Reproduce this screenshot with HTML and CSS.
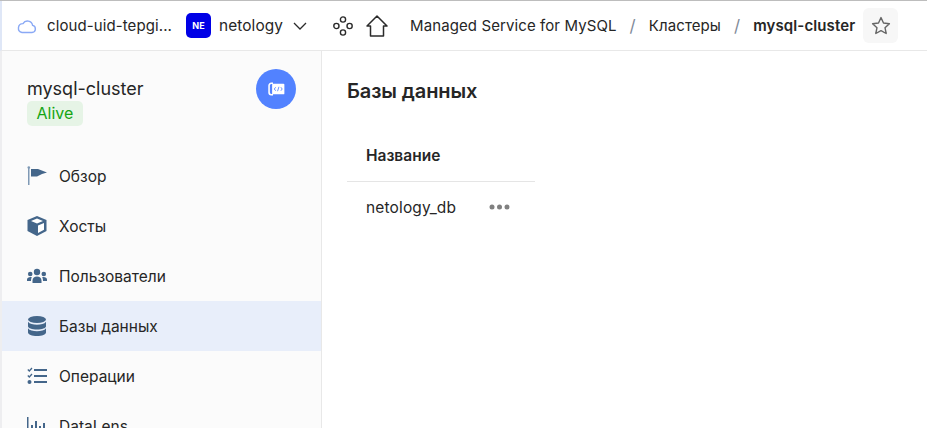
FILE: index.html
```html
<!DOCTYPE html>
<html lang="en">
<head>
    <meta charset="UTF-8">
    <title>mysql-cluster</title>
    <link rel="stylesheet" href="styles.css">
</head>
<body>
    <!-- Top bar -->
    <header class="topbar">
        <div class="cloud">
            <svg class="cloud-icon" width="20" height="16" viewBox="0 0 20 16"><path d="M5 14.500h10a3.600 3.600 0 0 0 .6-7.100A5.200 5.200 0 0 0 6 5.600 4.500 4.500 0 0 0 5 14.500z" fill="none" stroke="#8aa9f5" stroke-width="1.400"/></svg>
            <span class="cloud-name">cloud-uid-tepgi...</span>
        </div>
        <div class="folder">
            <span class="folder-badge">NE</span>
            <span class="folder-name">netology</span>
            <svg width="14" height="8" viewBox="0 0 14 8"><path d="M1 1l6 6 6-6" fill="none" stroke="#2b2b2b" stroke-width="1.300"/></svg>
        </div>
        <svg class="services" width="20" height="20" viewBox="0 0 20 20" fill="none" stroke="#2b2b2b" stroke-width="1.400">
            <circle cx="10" cy="3.500" r="2.600"/><circle cx="3.400" cy="10" r="2.600"/><circle cx="16.600" cy="10" r="2.600"/><circle cx="10" cy="16.500" r="2.600"/>
        </svg>
        <svg class="home" width="22" height="22" viewBox="0 0 22 22" fill="none" stroke="#2b2b2b" stroke-width="1.500"><path d="M1 11L11 1l10 10h-3.500v10h-13V11z" stroke-linejoin="round"/></svg>
        <nav class="crumbs">
            <span>Managed Service for MySQL</span>
            <span class="crumb-sep">/</span>
            <span>Кластеры</span>
            <span class="crumb-sep">/</span>
            <span class="crumb-current">mysql-cluster</span>
        </nav>
        <div class="star-btn">
            <svg width="20" height="19" viewBox="0 0 20 19"><path d="M10 1.600l2.500 5.400 5.900.7-4.400 4 1.200 5.800-5.200-2.900-5.200 2.900 1.200-5.800-4.400-4 5.900-.7z" fill="none" stroke="#666" stroke-width="1.400" stroke-linejoin="round"/></svg>
        </div>
    </header>

    <div class="main">
        <!-- Sidebar -->
        <aside class="sidebar">
            <div class="side-head">
                <div class="side-title">
                    <div class="cluster-name">mysql-cluster</div>
                    <span class="status">Alive</span>
                </div>
                <span class="service-logo">
                    <svg width="19" height="14" viewBox="0 0 20 16">
                        <path d="M6 1.500H4A2.500 2.500 0 0 0 1.500 4v8A2.500 2.500 0 0 0 4 14.500h2" fill="none" stroke="#fff" stroke-width="1.800"/>
                        <rect x="5" y="2" width="14" height="12" rx="1" fill="#fff"/>
                        <path d="M9 6L7.500 8 9 10M15 6l1.500 2L15 10M12.800 5.500l-1.600 5" fill="none" stroke="#5282ff" stroke-width="1"/>
                    </svg>
                </span>
            </div>
            <ul class="menu">
                <li class="menu-item">
                    <svg width="20" height="20" viewBox="0 0 20 20"><circle cx="1.800" cy="1.500" r="1.300" fill="#7f99b5"/><path d="M1 1h1.500v18H1z" fill="#7f99b5"/><path d="M4 3h7l9 3.500-5 1.500-5 2.500H4z" fill="#44668a"/></svg>
                    Обзор
                </li>
                <li class="menu-item">
                    <svg width="20" height="20" viewBox="0 0 20 20"><path d="M10 0l9.500 4v11L10 20 .5 15V4z" fill="#44668a"/><path d="M10 2.500L16 5l-6 2.500L4 5zM11 9.500l6-2.500v6.800l-6 3.200z" fill="#fff"/></svg>
                    Хосты
                </li>
                <li class="menu-item">
                    <svg width="20" height="16" viewBox="0 0 20 16" fill="#44668a"><circle cx="10" cy="4" r="3.200"/><circle cx="3.200" cy="6" r="2.300"/><circle cx="16.800" cy="6" r="2.300"/><path d="M5.500 15v-2.500C5.500 10 7.500 8.500 10 8.500s4.500 1.500 4.500 4V15zM0 13v-1.500C0 10 1.500 9 3.500 9c.6 0 1 .1 1.300.2-.5.9-.8 2-.8 3.300v.5zM20 13v-1.500C20 10 18.500 9 16.500 9c-.6 0-1 .1-1.300.2.500.9.800 2 .8 3.300v.5z"/></svg>
                    Пользователи
                </li>
                <li class="menu-item menu-item-active">
                    <svg width="20" height="20" viewBox="0 0 20 20" fill="#44668a"><ellipse cx="10" cy="3.500" rx="9" ry="3.500"/><path d="M1 5.800C2.500 8 6 8.700 10 8.700s7.500-.7 9-2.900v4.400c0 1.900-4 3.300-9 3.300s-9-1.400-9-3.300z"/><path d="M1 12.300c1.500 2.200 5 2.900 9 2.900s7.500-.7 9-2.900v4.200c0 1.900-4 3.500-9 3.500s-9-1.600-9-3.500z"/></svg>
                    Базы данных
                </li>
                <li class="menu-item">
                    <svg width="20" height="18" viewBox="0 0 20 18" fill="none" stroke="#44668a" stroke-width="2"><path d="M7 3h13M7 9h13M7 15h13"/><path d="M.8 2.500l1.500 1.500L5 1M.8 8.500L2.300 10 5 7" stroke-width="1.300"/><circle cx="2.500" cy="15" r="2" fill="#44668a" stroke="none"/></svg>
                    Операции
                </li>
                <li class="menu-item">
                    <svg width="20" height="18" viewBox="0 0 20 18" fill="#44668a"><path d="M0 0h1.500v18H0zM4 8h2v8H4zM8 4h2v12H8zM12 9h2v7h-2zM16 6h2v10h-2z"/></svg>
                    DataLens
                </li>
            </ul>
        </aside>

        <!-- Content -->
        <section class="content">
            <h2 class="page-title">Базы данных</h2>
            <div class="db-table">
                <div class="db-head">Название</div>
                <div class="db-row">
                    <span class="db-name">netology_db</span>
                    <svg width="21" height="6" viewBox="0 0 21 6" fill="#808080"><circle cx="3" cy="3" r="2.500"/><circle cx="10.500" cy="3" r="2.500"/><circle cx="18" cy="3" r="2.500"/></svg>
                </div>
            </div>
        </section>
    </div>
</body>
</html>
```

FILE: styles.css
```css
html, body {
    margin: 0;
    padding: 0;
    height: 428px;
    overflow: hidden;
}

body {
    font-family: 'Inter', 'Noto Sans', sans-serif;
    font-size: 15.5px;
    color: #262626;
    background-color: #fff;
    border-top: 1px solid #bdbdbd;
    box-sizing: border-box;
}

.topbar {
    display: flex;
    align-items: center;
    height: 49px;
    padding-left: 15px;
    border-left: 2px solid #dfe7f7;
    border-bottom: 1px solid #e8e8e8;
    font-size: 15px;
    letter-spacing: 0.1px;
}

.cloud {
    display: flex;
    align-items: center;
    width: 169px;
}

.cloud-name {
    margin-left: 10px;
}

.folder {
    display: flex;
    align-items: center;
    width: 147px;
}

.folder-badge {
    display: flex;
    align-items: center;
    justify-content: center;
    width: 25px;
    height: 25px;
    border-radius: 5px;
    background-color: #0000e6;
    color: #fff;
    font-size: 9px;
    font-weight: 700;
}

.folder-name {
    margin: 0 10px 0 8px;
    font-size: 15.4px;
}

.home {
    margin-left: 13px;
}

.crumbs {
    display: flex;
    align-items: center;
    margin-left: 22px;
}

.crumb-sep {
    margin: 0 13px;
    font-size: 17px;
    color: #7f8a99;
}

.crumb-current {
    font-weight: 600;
}

.star-btn {
    display: flex;
    align-items: center;
    justify-content: center;
    width: 35px;
    height: 35px;
    margin-left: 8px;
    border-radius: 6px;
    background-color: #f7f7f7;
}

.main {
    display: flex;
    height: 378px;
    border-left: 2px solid #eeeef0;
}

.sidebar {
    width: 319px;
    background-color: #fbfbfb;
    border-right: 1px solid #e8e8e8;
}

.side-head {
    display: flex;
    justify-content: space-between;
    height: 100px;
    padding: 18px 25px 0;
    box-sizing: border-box;
}

.side-title {
    margin-top: 7px;
}

.cluster-name {
    font-size: 18px;
    line-height: 25px;
}

.status {
    display: inline-block;
    padding: 0 10px 0 9.5px;
    font-size: 16px;
    line-height: 25px;
    border-radius: 5px;
    background-color: #e6f4e6;
    color: #14a514;
}

.service-logo {
    display: flex;
    align-items: center;
    justify-content: center;
    width: 40px;
    height: 40px;
    border-radius: 50%;
    background-color: #5282ff;
}

.menu {
    list-style: none;
    margin: 0;
    padding: 0;
}

.menu-item {
    display: flex;
    align-items: center;
    gap: 12px;
    height: 50px;
    padding-left: 25px;
}

.menu-item-active {
    background-color: #e8eefa;
}

.content {
    padding: 27px 25px;
}

.page-title {
    margin: 0;
    font-size: 20px;
    line-height: 26px;
    font-weight: 600;
    letter-spacing: -0.1px;
}

.db-table {
    width: 188px;
    margin-top: 27px;
}

.db-head {
    height: 50px;
    line-height: 50px;
    padding-left: 19px;
    font-size: 15.5px;
    font-weight: 600;
    border-bottom: 1px solid #e5e5e5;
}

.db-row {
    display: flex;
    align-items: center;
    justify-content: space-between;
    height: 50px;
    padding: 0 25px 0 19px;
}

.db-name {
    letter-spacing: 0.15px;
}
```
